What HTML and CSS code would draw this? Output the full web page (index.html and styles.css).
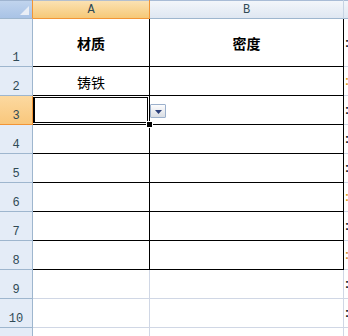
FILE: index.html
```html
<!DOCTYPE html>
<html>
<head>
<meta charset="utf-8">
<link rel="stylesheet" href="styles.css">
</head>
<body>
<div class="sheet">
  <div class="corner"><span class="corner-tri"></span></div>
  <div class="ch ch-sel">A</div>
  <div class="ch">B</div>
  <div class="ch ch-last"></div>

  <div class="rh">1</div>
  <div class="cell bk-r bk-b title">材质</div>
  <div class="cell bk-r bk-b title">密度</div>
  <div class="cell cc"><span class="frag">:</span></div>

  <div class="rh">2</div>
  <div class="cell bk-r bk-b txt">铸铁</div>
  <div class="cell bk-r bk-b"></div>
  <div class="cell cc"><span class="frag org">:</span></div>

  <div class="rh rh-sel">3</div>
  <div class="cell bk-r bk-b a3">
    <span class="selbox"></span>
    <span class="handle"></span>
    <span class="dd"><svg width="7" height="4" viewBox="0 0 7 4"><path d="M0 0H7L3.5 4Z" fill="#2b3f7a"/></svg></span>
  </div>
  <div class="cell bk-r bk-b"></div>
  <div class="cell cc"><span class="frag">:</span></div>

  <div class="rh">4</div>
  <div class="cell bk-r bk-b"></div>
  <div class="cell bk-r bk-b"></div>
  <div class="cell cc"><span class="frag">:</span></div>

  <div class="rh">5</div>
  <div class="cell bk-r bk-b"></div>
  <div class="cell bk-r bk-b"></div>
  <div class="cell cc"><span class="frag">:</span></div>

  <div class="rh">6</div>
  <div class="cell bk-r bk-b"></div>
  <div class="cell bk-r bk-b"></div>
  <div class="cell cc"><span class="frag org">:</span></div>

  <div class="rh">7</div>
  <div class="cell bk-r bk-b"></div>
  <div class="cell bk-r bk-b"></div>
  <div class="cell cc"><span class="frag">:</span></div>

  <div class="rh">8</div>
  <div class="cell bk-r bk-b"></div>
  <div class="cell bk-r bk-b"></div>
  <div class="cell cc"><span class="frag blu">:</span></div>

  <div class="rh">9</div>
  <div class="cell"></div>
  <div class="cell"></div>
  <div class="cell cc"><span class="frag">:</span></div>

  <div class="rh">10</div>
  <div class="cell"></div>
  <div class="cell"></div>
  <div class="cell cc"><span class="frag">:</span></div>

  <div class="rh"></div>
  <div class="cell"></div>
  <div class="cell"></div>
  <div class="cell cc"></div>
</div>
</body>
</html>
```
FILE: styles.css
```css
* { box-sizing: border-box; }
html, body { margin: 0; padding: 0; background: #fff; overflow: hidden; }
.sheet {
  width: 348px;
  height: 336px;
  overflow: hidden;
  display: grid;
  grid-template-columns: 33px 117px 194px 40px;
  grid-template-rows: 19px 48px repeat(10, 29px);
}
.corner {
  position: relative;
  background: linear-gradient(#c2d5ee, #a9c3e6);
  border-right: 1px solid #f29536;
  border-bottom: 1px solid #9eb6ce;
  box-shadow: inset 0 1px 0 #9fb4d0;
}
.corner-tri {
  position: absolute;
  right: 3px;
  bottom: 3px;
  width: 0;
  height: 0;
  border-left: 9px solid transparent;
  border-bottom: 9px solid #e9eef6;
}
.ch {
  font-family: "Liberation Mono", "DejaVu Sans Mono", monospace;
  font-size: 12px;
  color: #2f4a55;
  display: flex;
  align-items: center;
  justify-content: center;
  padding-top: 2px;
  background: linear-gradient(#f4f7fb, #dfe7f2);
  border-right: 1px solid #c6d3e3;
  border-bottom: 1px solid #9eb6ce;
  box-shadow: inset 0 1px 0 #a9bcd6;
}
.ch-sel {
  background: linear-gradient(#fbe3b6, #f6c877);
  border-right: 1px solid #f29536;
  border-bottom: 1px solid #f29536;
  box-shadow: inset 0 1px 0 #b3bfcf;
}
.ch-last { border-right: none; }
.rh {
  font-family: "Liberation Mono", "DejaVu Sans Mono", monospace;
  font-size: 12px;
  color: #2f4a55;
  background: #e4ecf7;
  border-right: 1px solid #9eb6ce;
  border-bottom: 1px solid #9eb6ce;
  display: flex;
  align-items: flex-end;
  justify-content: center;
  line-height: 12px;
  padding-bottom: 2px;
}
.rh-sel {
  background: linear-gradient(#fcd9a0, #f9c77c);
  border-right: 1px solid #f29536;
  border-bottom: 1px solid #f29536;
}
.cell {
  position: relative;
  border-right: 1px solid #d0d7e5;
  border-bottom: 1px solid #d0d7e5;
  display: flex;
  align-items: center;
  justify-content: center;
  font-family: "Noto Sans CJK SC", "Noto Sans", sans-serif;
  font-size: 14px;
  color: #000;
}
.bk-r { border-right-color: #000; }
.bk-b { border-bottom-color: #000; }
.title { font-weight: bold; padding-top: 1px; }
.txt { padding-top: 1px; }
.cc {
  justify-content: flex-start;
  align-items: center;
  padding-left: 1px;
}
.frag {
  font-family: "Liberation Sans", sans-serif;
  font-weight: bold;
  font-size: 12px;
  color: #111;
}
.frag.org { color: #e0a020; }
.frag.blu { color: #d08a30; }
.a3 { overflow: visible; z-index: 2; }
.selbox {
  position: absolute;
  left: 0;
  top: 1px;
  right: 1px;
  bottom: 1px;
  border: 1px solid #000;
  border-left-width: 2px;
}
.handle {
  position: absolute;
  right: -3px;
  bottom: -3px;
  width: 5px;
  height: 5px;
  background: #000;
  box-shadow: 0 0 0 1px #fff;
}
.dd {
  position: absolute;
  left: 117px;
  top: 8px;
  width: 16px;
  height: 14px;
  border: 1px solid #9bb0cc;
  border-radius: 1px;
  background: linear-gradient(#fdfdfe, #d9dde3);
  display: flex;
  align-items: center;
  justify-content: center;
  padding-top: 1px;
  z-index: 3;
}
.dd svg { display: block; }
```
